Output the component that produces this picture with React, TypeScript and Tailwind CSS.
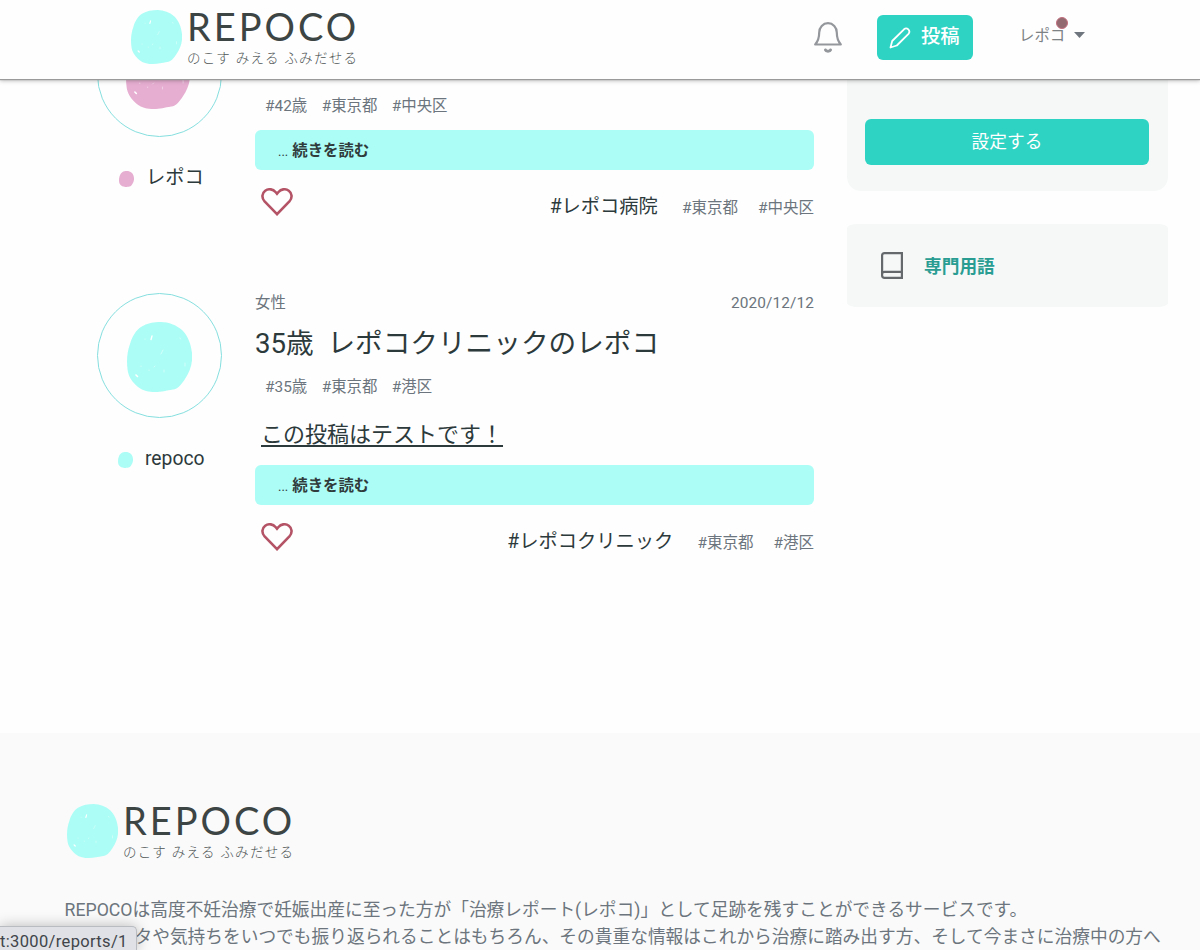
import type { ReactNode } from "react";

const BLOB =
  "M34 0 C42 0 49 3 55 8 C61 14 64 22 65 31 C66 41 63 50 58 57 C54 63 51 67 46 67.500 C39 68.500 35 70 28 70 C22 70 16 69 11 65 C5 60 1 54 .5 47 C-.5 39 0 30 3 22 C5 15 9 8 14 5 C20 1 27 0 34 0Z";

function Blob({ className, fill, specks = true }: { className: string; fill: string; specks?: boolean }) {
  return (
    <svg viewBox="0 0 65 70" preserveAspectRatio="none" className={className}>
      <path d={BLOB} fill={fill} />
      {specks && (
        <g stroke="#fff" strokeLinecap="round" fill="none">
          <path d="M25 14 24 17.500" strokeWidth="1.400" />
          <path d="M9 53 10.500 54.500" strokeWidth="1.600" />
          <path d="M36 28 34 32 M14 44v.5 M58 41v3 M37 48v2 M22 48v.5 M53 16l.5 1 M27 45l1-1 M18 17v.3" strokeWidth=".7" opacity=".65" />
        </g>
      )}
    </svg>
  );
}

function Logo() {
  return (
    <div className="flex">
      <Blob className="mt-px h-[54px] w-[51px]" fill="#acfdf6" />
      <div className="ml-[5px] w-[177px] whitespace-nowrap">
        <div className="-mt-px h-9 font-['Lato'] text-[38px] leading-9 tracking-[3px] text-[#3d4444]">REPOCO</div>
        <div className="mt-[6px] h-4 text-[13.500px] font-light leading-4 tracking-[1.3px] text-[#4d5454]">のこす みえる ふみだせる</div>
      </div>
    </div>
  );
}

function Heart() {
  return (
    <svg viewBox="0 0 32 28" className="mt-[18px] h-7 w-8" fill="none" stroke="#b45365" strokeWidth="2.600">
      <path d="M16 26.200 3.600 13.400C.3 9.800 1 5 4.200 2.700c3.500-2.500 8-1.400 10.300 1.300L16 5.700 17.500 4c2.300-2.700 6.800-3.800 10.300-1.300C31 5 31.700 9.800 28.400 13.400Z" />
    </svg>
  );
}

type PostProps = {
  className: string;
  color: string;
  name: string;
  blobClass: string;
  nameClass: string;
  header?: ReactNode;
  tags: string[];
  body?: string;
  clinic: string;
  places: string[];
};

function Post({ className, color, name, blobClass, nameClass, header, tags, body, clinic, places }: PostProps) {
  return (
    <article className={"flex " + className}>
      <div className="w-[125px] shrink-0">
        <div className="flex h-[125px] w-[124.500px] items-center justify-center rounded-full border border-[#86dfdf]">
          <Blob className={blobClass} fill={color} />
        </div>
        <div className="mt-[27px] flex h-7 items-center">
          <Blob className={"h-4 w-[15px] " + nameClass} fill={color} specks={false} />
          <span className="ml-3 whitespace-nowrap text-[19.3px] leading-7 text-[#2d3a3c]">{name}</span>
        </div>
      </div>
      <div className="ml-[33px] w-[559px]">
        <div className="h-[83px]">{header}</div>
        <div className="ml-[10px] flex h-[22px] gap-[14.500px] text-[15.4px] leading-[22px] text-[#6c757d]">
          {tags.map((t) => (
            <span key={t}>{t}</span>
          ))}
        </div>
        {body && <p className="ml-[6px] mt-[21px] h-8 text-[22px] leading-8 text-[#2d3a3c] underline decoration-[1.5px] underline-offset-[3px]">{body}</p>}
        <div className={(body ? "mt-[14px]" : "mt-[13px]") + " flex h-10 items-center rounded-[6px] bg-[#acfdf6] pl-[23px] pt-[3px] text-[15.4px] text-[#303b3c]"}>
          <span className="text-[13px]">...</span>
          <b className="ml-1">続きを読む</b>
        </div>
        <div className="flex h-[52px] justify-between pl-[6px]">
          <Heart />
          <div className="mt-[23px] flex h-7 items-baseline leading-7">
            <span className="text-[19.3px] text-[#2d3a3c]">{clinic}</span>
            {places.map((p, i) => (
              <span key={p} className={(i === 0 ? "ml-6" : "ml-5") + " text-[15.5px] text-[#6c757d]"}>
                {p}
              </span>
            ))}
          </div>
        </div>
      </div>
    </article>
  );
}

export default function App() {
  return (
    <div className="relative flex h-[950px] w-[1200px] flex-col overflow-hidden bg-[#fefefe] font-['Roboto','Noto_Sans_CJK_JP',sans-serif]">
      <header className="relative z-10 flex h-[79px] shrink-0 bg-[#fefefe] pl-[131px] pt-[9px] shadow-[0_1px_1px_#9a9a9a,0_2px_4px_#00000040]">
        <Logo />
        <svg viewBox="0 0 28 31" className="ml-[450px] mt-[13px] h-[31px] w-7 shrink-0" fill="none" stroke="#94979c" strokeWidth="2.200" strokeLinecap="round" strokeLinejoin="round">
          <path d="M1.200 22.500h25.600c-3-3.500-4-6-4-12C22.800 5.300 19 1.200 14 1.200S5.200 5.300 5.200 10.500c0 6-1 8.500-4 12Z" />
          <path d="M11.500 28c.5 1.500 4.500 1.500 5 0" strokeWidth="3" />
        </svg>
        <button className="ml-[35px] mt-[6px] flex h-[45px] w-24 shrink-0 items-center rounded-[6px] bg-[#2ed3c3] pl-3 text-white">
          <svg viewBox="0 0 22 22" className="h-[22px] w-[22px]" fill="none" stroke="currentColor" strokeWidth="1.800" strokeLinejoin="round">
            <path d="M1.500 20.500 3.200 14 15 2.300C18 -.3 22 3.800 19.500 6.800L7.800 18.500 1.500 20.500Z" />
          </svg>
          <span className="-mt-px ml-[10px] text-[19.3px] font-medium">投稿</span>
        </button>
        <div className="relative ml-[46px] mt-[13px] flex h-6 items-center text-[#7d8285]">
          <span className="mt-[5px] text-[15.4px]">レポコ</span>
          <span className="absolute left-[37px] top-[-5px] h-3 w-3 rounded-full border border-[#c46f7e] bg-[#936a70]" />
          <svg viewBox="0 0 11 6" className="ml-[9px] mt-px h-1.5 w-[11px]">
            <path d="M0 0h11L5.500 6Z" fill="#6f767e" />
          </svg>
        </div>
      </header>

      <main className="flex h-[654px] shrink-0 items-start overflow-hidden pl-[97px]">
        <div className="w-[717px]">
          <Post
            className="-mt-[67px] h-[281px]"
            color="#e6aed1"
            name="レポコ"
            blobClass="-mt-0.5 -ml-0.5 h-[70px] w-[64px]"
            nameClass="ml-[22px] mt-px"
            tags={["#42歳", "#東京都", "#中央区"]}
            clinic="#レポコ病院"
            places={["#東京都", "#中央区"]}
          />
          <Post
            className=""
            color="#acfdf6"
            name="repoco"
            blobClass="mt-0.5 h-[70px] w-[65px]"
            nameClass="ml-[21px] mt-px"
            header={
              <>
                <div className="flex h-5 justify-between text-[15.4px] leading-5 text-[#6c757d]">
                  <span>女性</span>
                  <span className="tracking-[.1px]">2020/12/12</span>
                </div>
                <h2 className="mt-[11px] h-10 whitespace-pre text-[27.650px] leading-10 text-[#2d3a3c]">35歳  レポコクリニックのレポコ</h2>
              </>
            }
            tags={["#35歳", "#東京都", "#港区"]}
            body="この投稿はテストです！"
            clinic="#レポコクリニック"
            places={["#東京都", "#港区"]}
          />
        </div>
        <aside className="ml-[33px] w-[321px]">
          <section className="h-28 rounded-b-[14px] bg-[#f6f8f8] px-[18px]">
            <svg viewBox="0 0 284 2" className="h-0.5 w-[284px]" stroke="#2d3a3c" strokeWidth="1">
              <path d="M64 .5h5M77 .5h2M91 .5h4M106 .5h2M115 .5h2" />
            </svg>
            <button className="mt-[38px] h-[46px] w-[284px] rounded-[6px] bg-[#2ed3c3] text-[17.7px] leading-[45px] text-white">設定する</button>
          </section>
          <section className="mt-[33px] flex h-[83px] items-center rounded-[10px/4px] bg-[#f6f8f8] pl-[34px]">
            <svg viewBox="0 0 22 27" className="h-[27px] w-[22px]" fill="none" stroke="#65696b" strokeWidth="2.200">
              <path d="M3.500 1.100H20.900V25.900H3.500Q1.100 25.900 1.100 23.500V3.500Q1.100 1.100 3.500 1.100ZM1.100 22Q1.100 19.900 3.500 19.900H20.900" />
            </svg>
            <span className="ml-[21px] mt-[3px] text-[17.7px] font-bold text-[#2a9d93]">専門用語</span>
          </section>
        </aside>
      </main>

      <footer className="h-[217px] shrink-0 bg-[#fafafa] pl-[67px] pt-[70px]">
        <Logo />
        <p className="-ml-[2.500px] mt-[37px] whitespace-nowrap text-[17.720px] leading-[26.5px] text-[#6c757d]">
          REPOCOは高度不妊治療で妊娠出産に至った方が「治療レポート(レポコ)」として足跡を残すことができるサービスです。
          <br />
          <span className="inline-block w-[70px]" />
          タや気持ちをいつでも振り返られることはもちろん、その貴重な情報はこれから治療に踏み出す方、そして今まさに治療中の方へ
        </p>
      </footer>
      <div className="absolute bottom-0 left-0 z-20 h-[24px] w-[137px] overflow-hidden whitespace-nowrap rounded-tr-[5px] border-r border-t border-[#b9bcc1] bg-[#dfe1e6] pt-[5px] text-[16.500px] leading-5 tracking-[.35px] text-[#41454a] shadow-[0_0_14px_#00000045]">
        t:3000/reports/1
      </div>
    </div>
  );
}
